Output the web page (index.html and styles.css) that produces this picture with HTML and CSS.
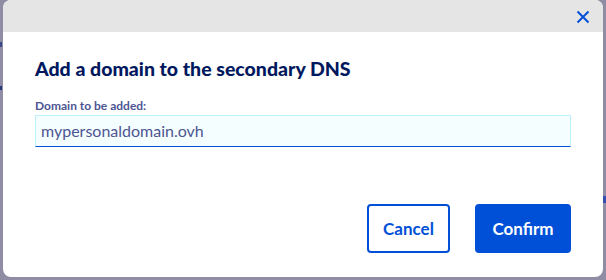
FILE: index.html
```html
<!DOCTYPE html>
<html lang="en">
<head>
<meta charset="utf-8">
<link rel="stylesheet" href="styles.css">
</head>
<body>
<div class="backdrop">
  <span class="ghost ghost-a"></span>
  <span class="ghost ghost-b"></span>
  <span class="ghost ghost-c"></span>
  <div class="modal">
    <div class="modal-header">
      <button class="close" aria-label="Close">
        <svg width="14" height="14" viewBox="0 0 14 14"><path d="M1.5 1.5 L12.5 12.5 M12.5 1.5 L1.5 12.5" stroke="#0050d7" stroke-width="2" fill="none"/></svg>
      </button>
    </div>
    <div class="modal-body">
      <h2 class="title">Add a domain to the secondary DNS</h2>
      <label class="label">Domain to be added:</label>
      <div class="input">mypersonaldomain.ovh</div>
      <div class="actions">
        <button class="btn btn-secondary">Cancel</button>
        <button class="btn btn-primary">Confirm</button>
      </div>
    </div>
  </div>
</div>
</body>
</html>
```
FILE: styles.css
```css
html, body {
  margin: 0;
  padding: 0;
}
body {
  width: 606px;
  height: 280px;
  overflow: hidden;
  background: #8e8da4;
  font-family: "Lato", "Open Sans", sans-serif;
}
.backdrop {
  position: relative;
  width: 606px;
  height: 280px;
  padding-left: 3px;
  box-sizing: border-box;
}
.ghost {
  position: absolute;
  background: #3c4a8a;
}
.ghost-a { left: 0; top: 42px; width: 2px; height: 5px; }
.ghost-b { left: 0; top: 86px; width: 2px; height: 4px; background: #2a3a7a; }
.ghost-c { left: 603px; top: 196px; width: 3px; height: 7px; background: #3550b0; }
.modal {
  width: 600px;
  height: 277px;
  background: #fff;
  border-radius: 8px;
  overflow: hidden;
  position: relative;
}
.modal-header {
  height: 32px;
  background: #e5e5e5;
  display: flex;
  justify-content: flex-end;
  align-items: center;
  padding-right: 13px;
}
.close {
  border: 0;
  background: none;
  padding: 0;
  margin-top: 2px;
  display: flex;
}
.modal-body {
  padding: 0 32px;
  display: flex;
  flex-direction: column;
}
.title {
  margin: 25px 0 0;
  font-size: 19.5px;
  line-height: 24px;
  font-weight: 900;
  color: #00185e;
}
.label {
  margin-top: 18px;
  font-size: 12px;
  line-height: 14px;
  font-weight: 700;
  color: #4d5592;
}
.input {
  margin-top: 2px;
  height: 32px;
  box-sizing: border-box;
  border: 1px solid #bef1ff;
  border-bottom: 1px solid #0050d7;
  background: #f5feff;
  padding: 0 5px;
  font-size: 16px;
  line-height: 30px;
  color: #4d5592;
}
.actions {
  margin-top: 57px;
  display: flex;
  justify-content: flex-end;
  gap: 25px;
}
.btn {
  height: 49px;
  box-sizing: border-box;
  border-radius: 4px;
  font-family: inherit;
  font-size: 17px;
  font-weight: 700;
  cursor: pointer;
}
.btn-secondary {
  width: 83px;
  background: #fff;
  border: 2px solid #0050d7;
  color: #0050d7;
}
.btn-primary {
  width: 96px;
  background: #0050d7;
  border: 2px solid #0050d7;
  color: #fff;
}
```
